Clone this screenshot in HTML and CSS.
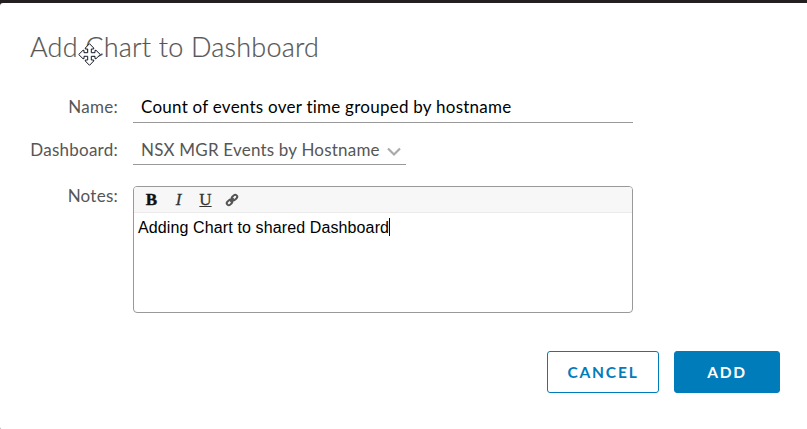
FILE: index.html
```html
<!DOCTYPE html>
<html lang="en">
<head>
<meta charset="utf-8">
<title>Add Chart to Dashboard</title>
<link rel="stylesheet" href="styles.css">
</head>
<body>
<main class="dialog">
  <h1 class="title"><span>Add Chart to Dashboard</span></h1>
  <svg class="cursor" width="23" height="23" viewBox="0 0 23 23"><path d="M11.5.7 15.7 5v1h-2.4v3.7h3.7V7.3h1l4.3 4.2-4.3 4.2h-1v-2.4h-3.7V17h2.4v1l-4.2 4.3L7.3 18v-1h2.4v-3.7H6v2.4H5L.7 11.5 5 7.3h1v2.4h3.7V6H7.3V5z" fill="#fff" stroke="#111827"/></svg>
  <div class="form">
    <span class="label">Name:</span>
    <div class="field name"><span class="name-text">Count of events over time grouped by hostname</span></div>
    <span class="label select-label">Dashboard:</span>
    <div class="field select"><span class="select-text">NSX MGR Events by Hostname</span>
      <svg class="chevron" width="16" height="12" viewBox="0 0 16 12"><path d="m2 2.5 6 6 6-6" fill="none" stroke="#aaa" stroke-width="2.2"/></svg>
    </div>
    <span class="label notes-label">Notes:</span>
    <div class="editor">
      <div class="toolbar">
        <b class="tool bold">B</b><i class="tool">I</i><u class="tool">U</u>
        <svg class="link" width="14" height="14" viewBox="0 0 14 14"><g transform="rotate(-45 7 7)" fill="none" stroke="#555" stroke-width="2"><rect x="0.5" y="5" width="6" height="4" rx="2"/><rect x="7.5" y="5" width="6" height="4" rx="2"/><path d="M4.5 7h5"/></g></svg>
      </div>
      <div class="content"><span>Adding Chart to shared Dashboard</span><span class="caret"></span></div>
    </div>
  </div>
  <div class="actions">
    <button class="button cancel">CANCEL</button>
    <button class="button add">ADD</button>
  </div>
</main>
</body>
</html>
```
FILE: styles.css
```css
* { box-sizing: border-box; }
body {
  margin: 0;
  height: 429px;
  padding-top: 3px;
  overflow: hidden;
  background: #231f20;
  font-family: Lato, "Liberation Sans", sans-serif;
  font-size: 17px;
  color: #565656;
}
.dialog {
  position: relative;
  height: 427px;
  padding: 27px 27px 0 30px;
  background: #fff;
  border-radius: 3px 0 0 3px;
}
.title {
  margin: 0;
  height: 56px;
  font-size: 27px;
  font-weight: 300;
  line-height: 33px;
  letter-spacing: 0.2px;
  -webkit-text-stroke: 0.2px #565656;
  white-space: nowrap;
}
.cursor { position: absolute; left: 78px; top: 40px; }
.form {
  display: grid;
  grid-template-columns: 88px 500px;
  column-gap: 15px;
  grid-template-rows: 37px 42px 148px;
}
.label {
  justify-self: end;
  padding-top: 9px;
  line-height: 24px;
  letter-spacing: 0.25px;
  white-space: nowrap;
}
.select-label { padding-top: 15px; }
.field {
  display: flex;
  align-items: flex-start;
  padding: 9px 0 0 8px;
  border-bottom: 1px solid #999;
  line-height: 24px;
  white-space: nowrap;
}
.name { color: #000; letter-spacing: 0.25px; }
.select { width: 273px; padding-top: 15px; letter-spacing: 0.2px; }
.chevron { margin: 8px 4px 0 auto; }
.notes-label { padding-top: 19px; }
.editor {
  height: 127px;
  margin-top: 21px;
  border: 1px solid #999;
  border-radius: 4px;
  overflow: hidden;
}
.toolbar {
  display: flex;
  align-items: center;
  height: 26px;
  padding-left: 4px;
  background: #f7f7f7;
  border-bottom: 1px solid #ebebeb;
  font-family: "Liberation Serif", serif;
  font-size: 17px;
  color: #333;
  -webkit-text-stroke: 0.3px #333;
}
.tool { width: 27px; text-align: center; line-height: 24px; }
.bold { color: #111; -webkit-text-stroke: 0.4px #111; }
.link { margin-left: 6px; }
.content {
  display: flex;
  padding: 5px 0 0 4px;
  color: #000;
  font-family: "Liberation Sans", sans-serif;
  font-size: 16px;
  line-height: 20px;
  letter-spacing: 0.12px;
}
.caret { width: 1px; height: 18px; background: #000; }
.actions {
  display: flex;
  justify-content: flex-end;
  gap: 15px;
  margin-top: 38px;
}
.button {
  height: 42px;
  padding: 0;
  border: 1px solid #007cbb;
  border-radius: 3px;
  font: bold 15.5px/40px Lato, sans-serif;
  letter-spacing: 1.8px;
}
.cancel { width: 112px; background: #fff; color: #007cbb; }
.add { width: 106px; background: #007cbb; color: #fff; }
```
